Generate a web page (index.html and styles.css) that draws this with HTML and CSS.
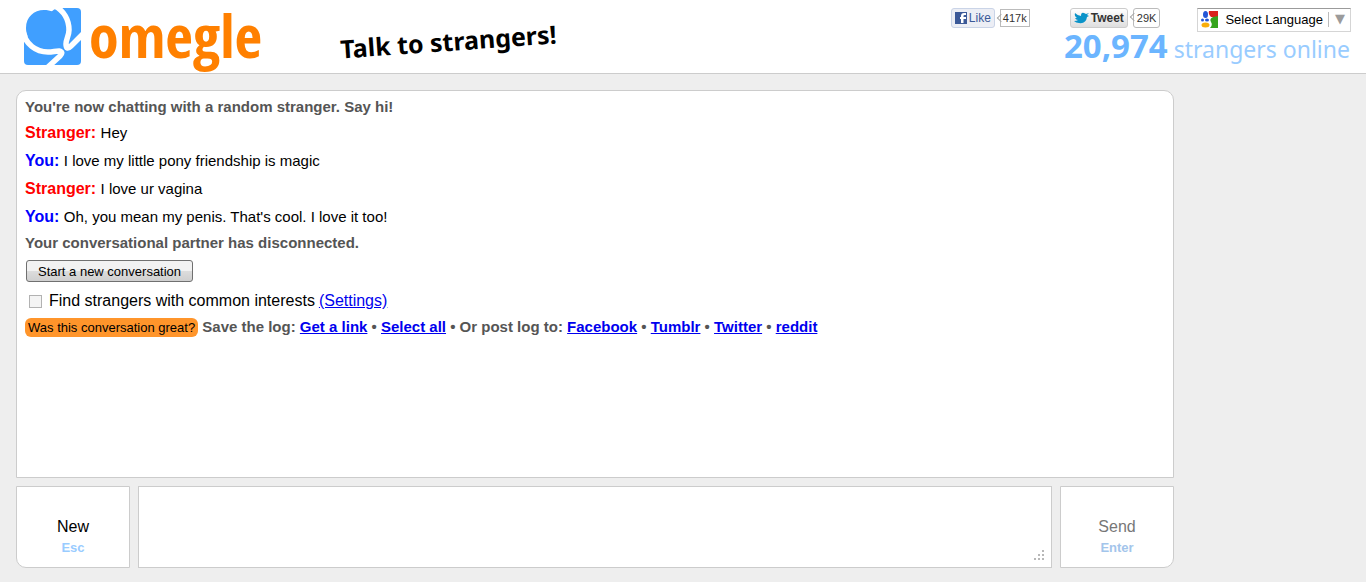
FILE: index.html
```html
<!DOCTYPE html>
<html lang="en">
<head>
<meta charset="utf-8">
<title>Omegle: Talk to strangers!</title>
<link rel="stylesheet" href="styles.css">
</head>
<body>
<header class="header">
  <div class="brand">
    <svg class="mark" viewBox="0 0 57 57" aria-hidden="true">
      <rect width="57" height="57" rx="4" fill="#409fff"/>
      <path d="M0 0H33Q21 6 0 33Z" fill="#fff"/>
      <path d="M2 20C2 9 10 2 20 2C33 2 41 12 41 23C41 28 39 31 38.500 36Q38 39 36 39Q31 41 24 41C11 40 2 31 2 20Z" fill="#409fff"/>
      <path d="M31-2C40 3 45 12 45 22C45 28 42 31 42 36Q42 43 47 38L59 26" fill="none" stroke="#fff" stroke-width="5.500"/>
      <path d="M-1 23C1 36 12 44 24 44C29 44 31 43 35 43Q40 44 36 48L24 59" fill="none" stroke="#fff" stroke-width="5.500"/>
    </svg>
    <span class="wordmark">omegle</span>
  </div>
  <p class="tagline">Talk to strangers!</p>
  <div class="tools">
    <div class="widgets">
      <div class="share like">
        <button class="share-btn fb"><svg width="12" height="12" viewBox="0 0 12 12" aria-hidden="true"><path fill="#3b5998" d="M0 0h12v12H0z"/><path fill="#fff" d="M6 11V7H5V5h1V4q0-3 3-3h2v2H9.500Q8.500 3 8.500 4v1H11v2H8.500v4z"/></svg>Like</button>
        <span class="count">417k</span>
      </div>
      <div class="share tweet">
        <button class="share-btn tw"><svg width="15" height="12" viewBox="0 0 15 12" aria-hidden="true"><path fill="#0a93c9" d="M1 1Q4 4 7 4Q7 0 10 1L12 2L15 1L13 3L15 4L13 5Q12 12 5 11Q2 11 0 9Q3 9 4 8Q2 8 1 6L3 6Q0 4 1 1Z"/></svg>Tweet</button>
        <span class="count">29K</span>
      </div>
      <button class="language">
        <svg width="17" height="17" viewBox="0 0 17 17" aria-hidden="true"><path fill="#d9231c" d="M8 0h9v6H10Q7 3 8 0"/><path fill="#36a41d" d="M17 5v12H9Q12 14 10 11Q8 8 12 6Z"/><ellipse cx="4.500" cy="3.500" rx="2.500" ry="3.500" fill="#2456d6"/><circle cx="1.500" cy="9" r="1.500" fill="#2456d6"/><ellipse cx="6" cy="9" rx="2" ry="1.500" fill="#2456d6"/><ellipse cx="4.500" cy="14" rx="4" ry="2.500" fill="#f9ae0c"/></svg>
        <span class="language-name">Select Language</span><span class="arrow">▼</span>
      </button>
    </div>
    <p class="online"><strong>20,974</strong> strangers online</p>
  </div>
</header>
<main class="chat">
  <section class="log">
    <p class="status">You're now chatting with a random stranger. Say hi!</p>
    <p class="msg"><strong class="stranger">Stranger:</strong> <span>Hey</span></p>
    <p class="msg"><strong class="you">You:</strong> <span>I love my little pony friendship is magic</span></p>
    <p class="msg"><strong class="stranger">Stranger:</strong> <span>I love ur vagina</span></p>
    <p class="msg"><strong class="you">You:</strong> <span>Oh, you mean my penis. That's cool. I love it too!</span></p>
    <p class="status">Your conversational partner has disconnected.</p>
    <p class="restart"><button class="start">Start a new conversation</button></p>
    <p class="interests"><input type="checkbox" class="check" id="common"><label for="common">Find strangers with common interests</label> <a href="#settings">(Settings)</a></p>
    <p class="status save"><span class="great">Was this conversation great?</span> Save the log: <a href="#link">Get a link</a> • <a href="#select">Select all</a> • Or post log to: <a href="#facebook">Facebook</a> • <a href="#tumblr">Tumblr</a> • <a href="#twitter">Twitter</a> • <a href="#reddit">reddit</a></p>
  </section>
  <div class="controls">
    <button class="action new">New<span class="key">Esc</span></button>
    <div class="compose">
      <textarea class="message" aria-label="Message"></textarea>
      <svg class="grip" width="11" height="11" viewBox="0 0 11 11" aria-hidden="true"><path fill="#b8b8b8" d="M8 0h2v2H8zM4 4h2v2H4zM8 4h2v2H8zM0 8h2v2H0zM4 8h2v2H4zM8 8h2v2H8z"/></svg>
    </div>
    <button class="action send">Send<span class="key">Enter</span></button>
  </div>
</main>
</body>
</html>
```
FILE: styles.css
```css
* { box-sizing: border-box; }
body {
  margin: 0;
  min-height: 100vh;
  display: flex;
  flex-direction: column;
  background: #eee;
  color: #000;
  font: 16px/20px "Liberation Sans", Arial, sans-serif;
}
p { margin: 0; }
button { font-family: inherit; margin: 0; }
a { color: #00e; }

.header {
  display: flex;
  align-items: flex-start;
  background: #fff;
  border-bottom: 1px solid #ccc;
  padding: 8px 16px 8px 24px;
}
.brand { display: flex; gap: 8px; width: 316px; }
.mark { width: 57px; height: 57px; }
.wordmark {
  color: #ff8000;
  font: bold 60px/54px "Liberation Sans Narrow", "Open Sans Condensed", "Liberation Sans", sans-serif;
}
.tagline {
  font: bold 25px/36px "Noto Sans", sans-serif;
  margin-top: 15px;
  transform: rotate(-4deg);
}
.tools { margin-left: auto; }
.widgets { display: flex; justify-content: flex-end; margin-right: -1px; }
.share { display: flex; gap: 6px; height: 20px; }
.like { gap: 5px; margin-right: 40px; }
.tweet { gap: 5px; margin-right: 37px; }
.share-btn {
  display: flex;
  align-items: center;
  gap: 2px;
  height: 20px;
  border: 1px solid #cad4e7;
  border-radius: 3px;
  background: #eceef5;
  padding: 0 3px;
  font-size: 12px;
}
.fb { color: #3b5998; }
.tw {
  border-color: #ccc;
  background: linear-gradient(#fff, #dedede);
  color: #333;
  font-weight: bold;
}
.count {
  position: relative;
  height: 18px;
  margin-top: 1px;
  border: 1px solid #bbb;
  background: #fff;
  color: #333;
  font-size: 11px;
  line-height: 17px;
  padding: 0 2px;
}
.tweet .count { margin-top: 0; height: 20px; line-height: 18px; border-radius: 3px; padding: 0 3px; }
.count::before {
  content: "";
  position: absolute;
  left: -3px;
  top: 5px;
  width: 5px;
  height: 5px;
  border: solid #aaa;
  border-width: 0 0 1px 1px;
  transform: rotate(45deg);
}
.language {
  display: flex;
  align-items: center;
  height: 24px;
  border: 1px solid #d5d5d5;
  border-top-color: #9b9b9b;
  background: #fff;
  padding: 0 5px 2px 3px;
  font-size: 13px;
}
.language-name { margin-left: 7px; padding-right: 5px; border-right: 1px solid #bbb; }
.arrow { margin-left: 6px; color: #9b9b9b; font: 13px/16px "DejaVu Sans", sans-serif; }
.online {
  color: #9cf;
  font: 23px/28px "Noto Sans", sans-serif;
  white-space: nowrap;
  text-align: right;
}
.online strong { color: #6bb5ff; font-size: 33px; }

.chat {
  flex: 1;
  display: flex;
  flex-direction: column;
  gap: 8px;
  margin: 16px 192px 14px 16px;
}
.log {
  flex: 1;
  background: #fff;
  border: 1px solid #ccc;
  border-radius: 10px 10px 0 0;
  padding: 4px 8px;
}
.status { color: #555; font-size: 15px; font-weight: bold; line-height: 24px; }
.msg { line-height: 28px; }
.msg span { font-size: 15px; }
.stranger { color: #f00; }
.you { color: #00f; }
.restart { display: flex; padding: 5px 0 0 1px; }
.start {
  height: 22px;
  border: 1px solid #707070;
  border-radius: 3px;
  background: linear-gradient(#f2f2f2 50%, #ddd 50%, #cfcfcf);
  padding: 0 11px;
  font-size: 13px;
}
.interests { display: flex; align-items: center; gap: 4px; padding: 9px 0 4px 4px; }
.check {
  appearance: none;
  width: 13px;
  height: 13px;
  margin: 0 3px 0 0;
  border: 1px solid #b2b2b2;
  background: #f4f4f4;
}
.great {
  border-radius: 6px;
  background: #ff952b;
  color: #000;
  padding: 2px 3px;
  font-size: 13px;
  font-weight: normal;
}
.controls { display: flex; gap: 8px; height: 82px; }
.action {
  width: 114px;
  border: 1px solid #ccc;
  background: #fff;
  padding: 21px 0 0;
  font-size: 16px;
  line-height: 20px;
}
.new { border-bottom-left-radius: 10px; }
.send { color: #777; border-bottom-right-radius: 10px; }
.key { display: block; color: #9cf; font-size: 13px; font-weight: bold; line-height: 22px; }
.send .key { color: #a3c5eb; }
.compose { position: relative; flex: 1; display: flex; }
.message {
  flex: 1;
  resize: none;
  border: 1px solid #ccc;
  border-radius: 0;
  background: #fff;
  padding: 8px;
  font: inherit;
}
.grip { position: absolute; right: 7px; bottom: 7px; }
```
